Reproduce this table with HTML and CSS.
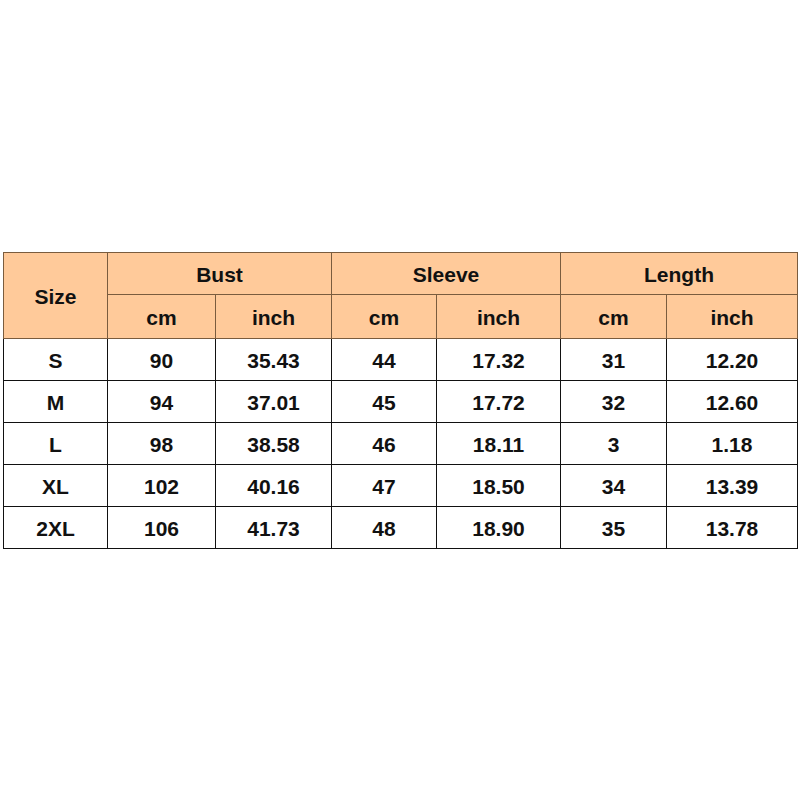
FILE: index.html
```html
<!DOCTYPE html>
<html>
<head>
<meta charset="utf-8">
<link rel="stylesheet" href="styles.css">
</head>
<body>
<div class="page">
<table class="size-table">
  <colgroup>
    <col class="c1"><col class="c2"><col class="c3"><col class="c4"><col class="c5"><col class="c6"><col class="c7">
  </colgroup>
  <thead>
    <tr class="h1">
      <th rowspan="2">Size</th>
      <th colspan="2">Bust</th>
      <th colspan="2">Sleeve</th>
      <th colspan="2">Length</th>
    </tr>
    <tr class="h2">
      <th>cm</th><th>inch</th><th>cm</th><th>inch</th><th>cm</th><th>inch</th>
    </tr>
  </thead>
  <tbody>
    <tr><td>S</td><td>90</td><td>35.43</td><td>44</td><td>17.32</td><td>31</td><td>12.20</td></tr>
    <tr><td>M</td><td>94</td><td>37.01</td><td>45</td><td>17.72</td><td>32</td><td>12.60</td></tr>
    <tr><td>L</td><td>98</td><td>38.58</td><td>46</td><td>18.11</td><td>3</td><td>1.18</td></tr>
    <tr><td>XL</td><td>102</td><td>40.16</td><td>47</td><td>18.50</td><td>34</td><td>13.39</td></tr>
    <tr><td>2XL</td><td>106</td><td>41.73</td><td>48</td><td>18.90</td><td>35</td><td>13.78</td></tr>
  </tbody>
</table>
</div>
</body>
</html>
```

FILE: styles.css
```css
html, body {
  margin: 0;
  padding: 0;
  background: #ffffff;
}
.page {
  padding: 252px 0 0 3px;
}
.size-table {
  border-collapse: collapse;
  table-layout: fixed;
  width: 794px;
  font-family: "Liberation Sans", Arial, sans-serif;
  font-weight: bold;
  font-size: 21px;
  color: #111111;
}
.c1 { width: 104px; }
.c2 { width: 108px; }
.c3 { width: 116px; }
.c4 { width: 105px; }
.c5 { width: 124px; }
.c6 { width: 106px; }
.c7 { width: 131px; }
.size-table th,
.size-table td {
  padding: 2px 0 0 0;
  line-height: 1;
  text-align: center;
  vertical-align: middle;
  border: 1px solid #111111;
}
.size-table th {
  background: #ffca9a;
  border-color: #7a5c3e;
  font-weight: bold;
}
.h1 { height: 42px; }
.h2 { height: 44px; }
.size-table tbody tr { height: 42px; }
```
